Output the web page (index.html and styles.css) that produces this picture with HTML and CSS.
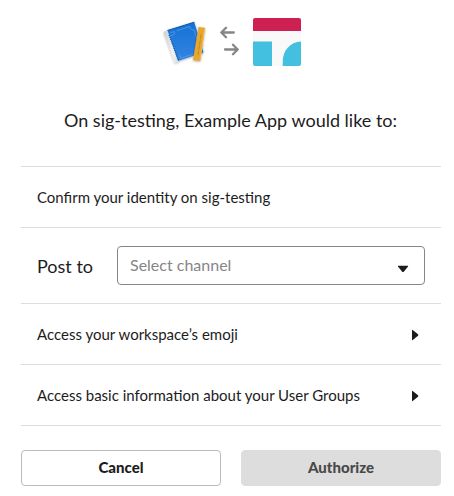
FILE: index.html
```html
<!DOCTYPE html>
<html lang="en">
<head>
<meta charset="utf-8">
<title>Authorize Example App</title>
<link rel="stylesheet" href="styles.css">
</head>
<body>
<main class="dialog">
  <header class="apps">
    <svg class="book" width="48" height="48" viewBox="0 0 48 48" aria-hidden="true">
      <defs>
        <linearGradient id="cover" x1="0" y1="0" x2="0" y2="1"><stop offset="0" stop-color="#1672d3"/><stop offset="1" stop-color="#3384e2"/></linearGradient>
        <linearGradient id="spine" x1="0" y1="0" x2="1" y2="0"><stop offset="0" stop-color="#c9cbcd"/><stop offset=".6" stop-color="#f3f3f3"/><stop offset="1" stop-color="#d5d7d9"/></linearGradient>
        <filter id="shade" x="-20%" y="-20%" width="140%" height="140%"><feDropShadow dx="0" dy=".7" stdDeviation=".8" flood-opacity=".35"/></filter>
      </defs>
      <g filter="url(#shade)">
        <path d="M1.5 14 6 12 17 43.3 13 45Z" fill="url(#spine)"/>
        <path d="M5.5 12.5 32.3 4.2 41.5 34.5 16 43Z" fill="url(#cover)"/>
        <path d="M5.5 12.5 32.3 4.2" stroke="#0753a5" stroke-width="1" fill="none"/>
        <path d="M7 17 16.5 42" stroke="#07549f" stroke-width="1.2" stroke-dasharray="1 1" fill="none"/>
        <path d="M8.2 17.5Q12.5 18 12.7 14M8.5 14.7l4-1.2M15 12.8 28 8.5M27.8 8.5q.5 4 4.3 3.2M32 12l3 9M17.5 36.8l1.3 3.3 12-3.8" stroke="#65a6ea" stroke-width=".6" fill="none"/>
      </g>
      <g filter="url(#shade)">
        <path d="M36.5 9 43 9.7 38.2 42.9 31 42.2Z" fill="#e9a62d"/>
        <path d="M39.2 16 35.9 37" stroke="#b98122" stroke-width=".8" stroke-dasharray="5 .7"/>
        <path d="M42.4 12 38 42" stroke="#f1ba4b" stroke-width="1"/>
      </g>
    </svg>
    <svg class="swap" width="20" height="30" viewBox="0 0 20 30" fill="none" stroke="#868686" stroke-width="2.3" stroke-linecap="round" stroke-linejoin="round" aria-hidden="true">
      <path d="M14.8 6.5H2.5M7 1.8 2.3 6.5 7 11.2M6 23.5H18.5M14 18.8 18.7 23.5 14 28.2"/>
    </svg>
    <svg class="logo" width="48" height="48" viewBox="0 0 48 48" aria-hidden="true">
      <defs><clipPath id="tile"><rect width="48" height="48" rx="2"/></clipPath></defs>
      <g clip-path="url(#tile)">
        <path fill="#f9f9f9" d="M0 0h48v48H0z"/>
        <path fill="#ce2052" d="M0 0h48v13H0z"/>
        <path fill="#43bfdf" d="M0 23.5h19V48H0zM48 23.5V48H29.7V44C29.7 32.5 37 24 48 23.5z"/>
      </g>
    </svg>
  </header>
  <h1 class="title">On sig-testing, Example App would like to:</h1>
  <ul class="scopes">
    <li class="row">Confirm your identity on sig-testing</li>
    <li class="row row-channel">
      <span class="label">Post to</span>
      <div class="select"><span>Select channel</span>
        <svg width="12" height="8" viewBox="0 0 12 8"><path d="M1.3.8h9.4q.8 0 .3.7L6.8 6.7q-.8.8-1.6 0L1 1.5q-.5-.7.3-.7z" fill="#1d1c1d"/></svg>
      </div>
    </li>
    <li class="row"><span>Access your workspace’s emoji</span>
      <svg class="caret" width="8" height="12" viewBox="0 0 8 12"><path d="M1 1.3q0-.9.7-.4L7 5.3q.7.7 0 1.4L1.7 11.1q-.7.5-.7-.4z" fill="#1d1c1d"/></svg>
    </li>
    <li class="row"><span>Access basic information about your User Groups</span>
      <svg class="caret" width="8" height="12" viewBox="0 0 8 12"><path d="M1 1.3q0-.9.7-.4L7 5.3q.7.7 0 1.4L1.7 11.1q-.7.5-.7-.4z" fill="#1d1c1d"/></svg>
    </li>
  </ul>
  <div class="actions">
    <button class="button cancel">Cancel</button>
    <button class="button authorize">Authorize</button>
  </div>
</main>
</body>
</html>
```

FILE: styles.css
```css
* { box-sizing: border-box; }
body {
  margin: 0;
  background: #fff;
  color: #1d1c1d;
  font: 15px/22px Lato, sans-serif;
}
.dialog { width: 420px; margin: 18px 0 0 21px; }
.apps { display: flex; height: 48px; padding-left: 141px; }
.swap { margin: 8px 0 0 9px; }
.logo { margin-left: 14px; }
.title {
  margin: 40px 0 32px;
  padding-right: 1px;
  font-size: 18px;
  font-weight: 400;
  line-height: 28px;
  text-align: center;
}
.scopes { margin: 0; padding: 0; list-style: none; border-bottom: 1px solid #ddd; }
.row {
  display: flex;
  align-items: center;
  justify-content: space-between;
  height: 61px;
  padding: 0 22px 0 16px;
  border-top: 1px solid #ddd;
}
.caret { margin-top: 2px; }
.row-channel { height: 76px; padding: 0 16px; }
.label { font-size: 18px; }
.select {
  display: flex;
  align-items: center;
  justify-content: space-between;
  width: 308px;
  height: 39px;
  padding: 0 15px 1px 12px;
  border: 1px solid #868686;
  border-radius: 4px;
  color: #868686;
  font-size: 16px;
}
.select svg { margin-top: 7px; }
.actions { display: flex; gap: 20px; margin-top: 24px; }
.button {
  width: 200px;
  height: 36px;
  padding: 0 0 2px;
  border: 1px solid #bbb;
  border-radius: 4px;
  background: #fff;
  color: #1d1c1d;
  font: 900 15px/22px Lato, sans-serif;
}
.authorize { border-color: #ddd; background: #ddd; color: #4a494a; }
```
